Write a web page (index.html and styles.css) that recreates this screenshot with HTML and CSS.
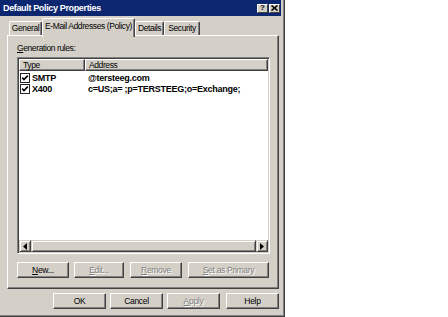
FILE: index.html
```html
<!DOCTYPE html>
<html lang="en">
<head>
  <meta charset="UTF-8" />
  <title>Default Policy Properties</title>
  <link rel="stylesheet" href="styles.css">
</head>
<body>
  <div class="janela">
    <div class="titulo">
      <span class="titulo-texto">Default Policy Properties</span>
      <div class="titulo-botoes">
        <span class="cap-btn cap-ajuda">?</span>
        <span class="cap-btn">
          <svg width="7" height="6" viewBox="0 0 7 6"><path d="M0.5 0.5 L6.5 5.5 M6.5 0.5 L0.5 5.5" stroke="#000" stroke-width="1.6"/></svg>
        </span>
      </div>
    </div>

    <div class="conteudo">
      <div class="abas">
        <div class="aba aba-general">General</div>
        <div class="aba aba-ativa">E-Mail Addresses (Policy)</div>
        <div class="aba aba-details">Details</div>
        <div class="aba aba-security">Security</div>
      </div>

      <div class="painel">
        <div class="rotulo"><u>G</u>eneration rules:</div>

        <div class="lista">
          <div class="cabecalho">
            <div class="col col-tipo">Type</div>
            <div class="col col-end">Address</div>
          </div>
          <div class="linhas">
            <div class="linha">
              <span class="tipo">
                <svg class="check" width="10" height="10" viewBox="0 0 10 10"><rect x="0.5" y="0.5" width="9" height="9" fill="#fff" stroke="#222"/><path d="M2.2 4.6 L4 6.5 L7.8 2.6" fill="none" stroke="#000" stroke-width="1.6"/></svg>
                SMTP
              </span>
              <span class="end">@tersteeg.com</span>
            </div>
            <div class="linha">
              <span class="tipo">
                <svg class="check" width="10" height="10" viewBox="0 0 10 10"><rect x="0.5" y="0.5" width="9" height="9" fill="#fff" stroke="#222"/><path d="M2.2 4.6 L4 6.5 L7.8 2.6" fill="none" stroke="#000" stroke-width="1.6"/></svg>
                X400
              </span>
              <span class="end">c=US;a= ;p=TERSTEEG;o=Exchange;</span>
            </div>
          </div>
          <div class="rolagem">
            <span class="seta">
              <svg width="4" height="7" viewBox="0 0 4 7"><path d="M4 0 L0 3.5 L4 7 Z" fill="#000"/></svg>
            </span>
            <span class="trilho"></span>
            <span class="seta">
              <svg width="4" height="7" viewBox="0 0 4 7"><path d="M0 0 L4 3.5 L0 7 Z" fill="#000"/></svg>
            </span>
          </div>
        </div>

        <div class="acoes">
          <button class="botao b-new"><u>N</u>ew...</button>
          <button class="botao b-edit" disabled><u>E</u>dit...</button>
          <button class="botao b-remove" disabled><u>R</u>emove</button>
          <button class="botao b-primary" disabled><u>S</u>et as Primary</button>
        </div>
      </div>

      <div class="rodape">
        <button class="botao b-rodape">OK</button>
        <button class="botao b-rodape">Cancel</button>
        <button class="botao b-rodape" disabled><u>A</u>pply</button>
        <button class="botao b-rodape b-help">Help</button>
      </div>
    </div>
  </div>
</body>
</html>
```

FILE: styles.css
```css
body {
  margin: 0;
  background: #fff;
  font-family: 'Liberation Sans', Arial, sans-serif;
  font-size: 8.5px;
  letter-spacing: -0.4px;
  color: #000;
  white-space: nowrap;
}

.janela {
  width: 285px;
  height: 317px;
  box-sizing: border-box;
  background: #d4d0c8;
  border-right: 1px solid #404040;
  border-bottom: 1px solid #404040;
  box-shadow: inset -1px -1px #808080;
  padding: 0 3px 0 0;
}

.titulo {
  height: 16px;
  background: #0c2670;
  display: flex;
  align-items: center;
  justify-content: space-between;
  padding-left: 3px;
}

.titulo-texto {
  color: #fff;
  font-weight: bold;
  font-size: 9px;
  letter-spacing: -0.35px;
}

.titulo-botoes {
  display: flex;
  gap: 1px;
  margin-right: 1px;
}

.cap-btn {
  width: 11px;
  height: 9px;
  box-sizing: border-box;
  background: #d4d0c8;
  border-top: 1px solid #fff;
  border-left: 1px solid #fff;
  border-right: 1px solid #404040;
  border-bottom: 1px solid #404040;
  display: flex;
  align-items: center;
  justify-content: center;
}

.cap-ajuda {
  font-weight: bold;
  font-size: 8px;
  letter-spacing: 0;
  line-height: 1;
}

.conteudo {
  padding: 0 2px 0 7px;
}

.abas {
  height: 19px;
  display: flex;
  align-items: flex-end;
  padding-left: 2px;
}

.aba {
  height: 14px;
  box-sizing: border-box;
  border-top: 1px solid #fff;
  border-left: 1px solid #fff;
  border-right: 1px solid #404040;
  box-shadow: inset -1px 0 #808080;
  border-radius: 2px 2px 0 0;
  text-align: center;
  line-height: 13px;
}

.aba-general { width: 33px; }
.aba-details { width: 29px; }
.aba-security { width: 36px; }

.aba-ativa {
  width: 93px;
  height: 19px;
  line-height: 14px;
  position: relative;
  z-index: 1;
  margin-bottom: -2px;
  background: #d4d0c8;
}

.painel {
  height: 254px;
  box-sizing: border-box;
  border-top: 1px solid #fff;
  border-left: 1px solid #fff;
  border-right: 1px solid #404040;
  border-bottom: 1px solid #404040;
  box-shadow: inset -1px -1px #808080;
  padding: 7px 8px 0 9px;
  display: flex;
  flex-direction: column;
}

.rotulo {
  height: 11px;
  line-height: 11px;
  margin-bottom: 3px;
}

.lista {
  width: 253px;
  height: 197px;
  box-sizing: border-box;
  background: #fff;
  border-top: 1px solid #808080;
  border-left: 1px solid #808080;
  border-right: 1px solid #fff;
  border-bottom: 1px solid #fff;
  box-shadow: inset 1px 1px #404040, inset -1px -1px #d4d0c8;
  padding: 1px;
  display: flex;
  flex-direction: column;
}

.cabecalho {
  display: flex;
  height: 12px;
}

.col {
  box-sizing: border-box;
  background: #d4d0c8;
  border-top: 1px solid #fff;
  border-left: 1px solid #fff;
  border-right: 1px solid #404040;
  border-bottom: 1px solid #404040;
  box-shadow: inset -1px -1px #808080;
  line-height: 10px;
  padding-left: 3px;
}

.col-tipo { width: 66px; }
.col-end { flex: 1; }

.linhas {
  flex: 1;
  padding-top: 1px;
}

.linha {
  display: flex;
  height: 11px;
  align-items: center;
  font-weight: bold;
  font-size: 9px;
  letter-spacing: -0.25px;
}

.tipo {
  width: 68px;
  display: flex;
  align-items: center;
  gap: 2px;
  padding-left: 1px;
}

.check {
  display: block;
}

.rolagem {
  height: 12px;
  display: flex;
}

.seta,
.trilho {
  box-sizing: border-box;
  background: #d4d0c8;
  border-top: 1px solid #d4d0c8;
  border-left: 1px solid #d4d0c8;
  border-right: 1px solid #404040;
  border-bottom: 1px solid #404040;
  box-shadow: inset 1px 1px #fff, inset -1px -1px #808080;
}

.seta {
  width: 12px;
  display: flex;
  align-items: center;
  justify-content: center;
}

.trilho {
  flex: 1;
}

.acoes {
  display: flex;
  margin-top: 8px;
}

.botao {
  height: 16px;
  box-sizing: border-box;
  background: #d4d0c8;
  border-top: 1px solid #fff;
  border-left: 1px solid #fff;
  border-right: 1px solid #404040;
  border-bottom: 1px solid #404040;
  box-shadow: inset -1px -1px #808080;
  font-family: inherit;
  font-size: 8.5px;
  letter-spacing: -0.3px;
  color: #000;
  padding: 0;
  line-height: 13px;
}

.botao:disabled {
  color: #808080;
  text-shadow: 1px 1px #fff;
}

.b-new { width: 52px; }
.b-edit { width: 50px; margin-left: 5px; }
.b-remove { width: 52px; margin-left: 6px; }
.b-primary { width: 81px; margin-left: 6px; }

.rodape {
  display: flex;
  justify-content: flex-end;
  gap: 4px;
  margin-top: 4px;
}

.b-rodape {
  width: 53px;
}

.b-help {
  margin-left: 2px;
}
```
